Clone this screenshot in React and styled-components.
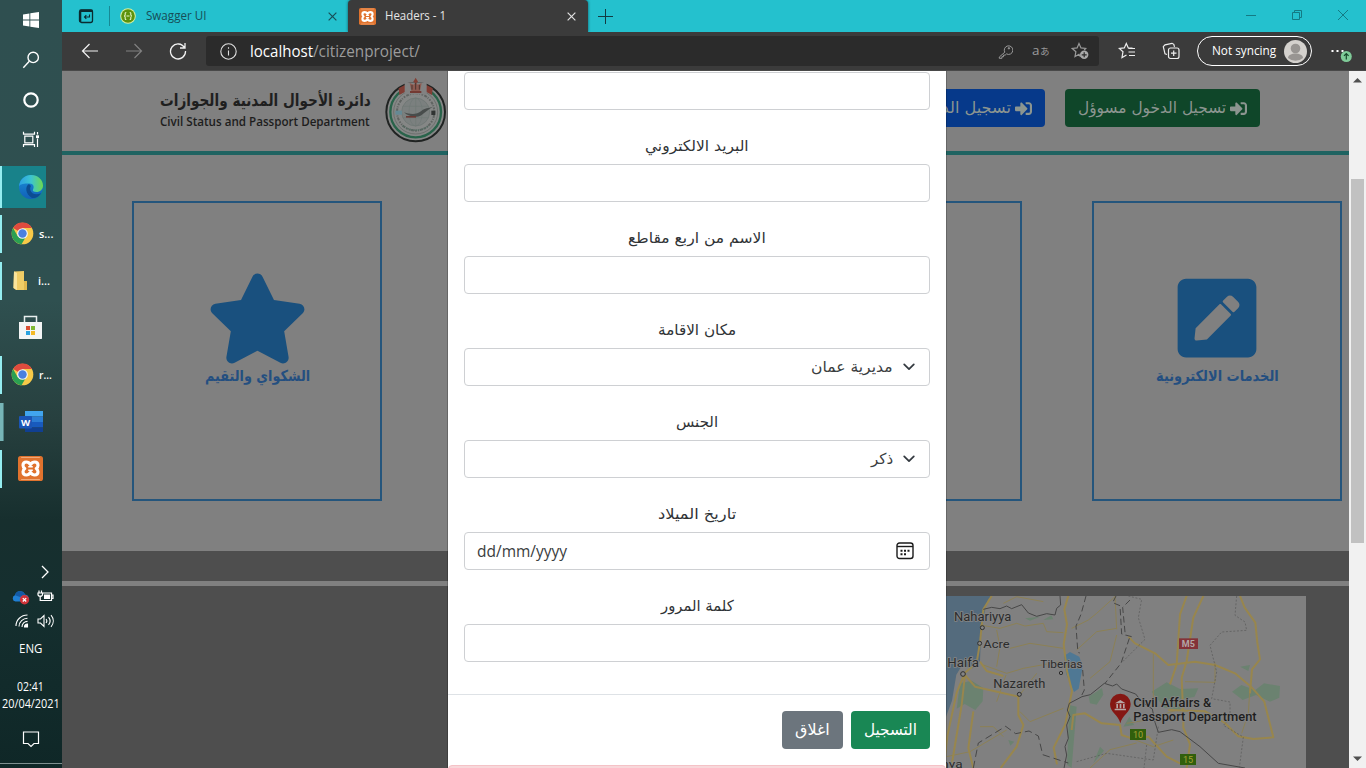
import React, { useLayoutEffect, useRef, useState } from "react";
import styled, { createGlobalStyle } from "styled-components";
import { FaSignInAlt, FaStar, FaPenSquare } from "react-icons/fa";

const GlobalStyle = createGlobalStyle`
  * { box-sizing: border-box; }
  body { margin: 0; overflow: hidden; font-family: "Open Sans", "Noto Sans", "Liberation Sans", sans-serif; }
  svg { display: block; flex: none; }
`;

const FitBox = styled.span`
  display: inline-block;
  flex: none;
  text-align: left;
  white-space: nowrap;
  line-height: ${(p) => p.$line || 20}px;
  font-size: ${(p) => p.$size}px;
  font-weight: ${(p) => p.$weight || 400};
  font-family: ${(p) => (p.$arabic ? '"DejaVu Sans", sans-serif' : '"Open Sans", "Noto Sans", sans-serif')};
  color: ${(p) => p.$color || "inherit"};
  width: ${(p) => p.$width}px;
`;
const FitInner = styled.span`
  display: inline-block;
  transform-origin: 0 50%;
`;

// Condenses or widens its text so that it fills exactly `width` pixels.
function FitText({ width, size, weight, line, color, arabic, children }) {
  const ref = useRef(null);
  const [scale, setScale] = useState(1);
  useLayoutEffect(() => {
    setScale(width / ref.current.offsetWidth);
  }, [width, size]);
  return (
    <FitBox $width={width} $size={size} $weight={weight} $line={line} $color={color} $arabic={arabic} dir={arabic ? "ltr" : undefined}>
      <FitInner ref={ref} dir={arabic ? "rtl" : undefined} style={{ transform: `scaleX(${scale})` }}>
        {children}
      </FitInner>
    </FitBox>
  );
}

const Screen = styled.div`
  display: grid;
  grid-template-columns: 62px 1304px;
  width: 1366px;
  height: 768px;
  overflow: hidden;
`;

/* ---------- Taskbar ---------- */
const Taskbar = styled.aside`
  display: flex;
  flex-direction: column;
  height: 768px;
  color: #fff;
  background: linear-gradient(180deg, #2f4f50 0, #2f5050 300px, #27403f 420px, #172f2e 520px, #152f2f 600px, #0f2727 768px);
`;
const SystemCell = styled.div`
  height: 40px;
  display: flex;
  align-items: center;
  justify-content: center;
`;
const AppCell = styled.div`
  height: 47px;
  display: flex;
  align-items: center;
`;
const AppTile = styled.div`
  width: ${(p) => (p.$active ? 46 : 62)}px;
  height: ${(p) => (p.$active ? 42 : 38)}px;
  display: flex;
  align-items: center;
  gap: 5px;
  padding-left: ${(p) => p.$indent || 18}px;
  background: ${(p) => (p.$active ? "#18828a" : "transparent")};
  box-shadow: ${(p) =>
    p.$stacked ? "inset 3px 0 #77b5b7, inset 4px 0 #4f8082" : p.$running ? "inset 2px 0 #94edf0" : "none"};
`;
const Spacer = styled.div`
  height: ${(p) => p.$h}px;
`;
const Tray = styled.div`
  display: flex;
  flex-direction: column;
`;
const TrayRow = styled.div`
  display: flex;
  align-items: center;
  justify-content: ${(p) => p.$justify || "center"};
  height: ${(p) => p.$h}px;
  gap: ${(p) => p.$gap || 0}px;
  padding: 0 ${(p) => p.$right || 0}px 0 ${(p) => p.$left || 0}px;
`;
const TrayEdge = styled.div`
  height: 1px;
  background: #7e9090;
`;

const ChromeIcon = () => (
  <svg width="23" height="23" viewBox="0 0 24 24">
    <circle cx="12" cy="12" r="11.3" fill="#f7c948" />
    <path d="M12 12 2.2 6.3A11.3 11.3 0 0 1 21.8 6.3H12Z" fill="#df4b3e" />
    <path d="M2.2 6.3A11.3 11.3 0 0 0 11 23.3L16 14.5 12 12 7 14.8Z" fill="#2ba052" />
    <circle cx="12" cy="12" r="5.6" fill="#f4f7f8" />
    <circle cx="12" cy="12" r="4.4" fill="#4a80e0" />
  </svg>
);
const XamppIcon = ({ size }) => (
  <svg width={size} height={size} viewBox="0 0 24 24">
    <rect width="24" height="24" rx="2.5" fill="#e0732e" />
    <path d="M3 1.5h18M3 22.5h18" stroke="#efa878" strokeWidth="1" />
    <path
      d="M12 8.300C10.900 6.600 9.600 5.800 8 5.800c-1.900 0-3.200 1.300-3.200 3 0 1.400.7 2.500 1.700 3.200-1 .7-1.700 1.800-1.700 3.200 0 1.700 1.300 3 3.200 3 1.600 0 2.900-.8 4-2.500 1.100 1.700 2.400 2.500 4 2.500 1.900 0 3.200-1.300 3.200-3 0-1.400-.7-2.500-1.700-3.200 1-.7 1.700-1.800 1.700-3.200 0-1.700-1.300-3-3.200-3-1.600 0-2.900.8-4 2.500Z"
      fill="none"
      stroke="#fff"
      strokeWidth="3"
      strokeLinejoin="round"
    />
    <path d="M9.800 10.400h4.400M9.800 13.600h4.400" stroke="#fff" strokeWidth="1.500" />
  </svg>
);

function TaskbarPanel() {
  return (
    <Taskbar>
      <SystemCell>
        <svg width="18" height="18" viewBox="0 0 18 18" fill="#fff">
          <path d="M1 3.4 7.4 2.5V8.500H1ZM8.300 2.300 17 1V8.500H8.300ZM1 9.400h6.400v6.100L1 14.600ZM8.300 9.400H17V17l-8.700-1.300Z" />
        </svg>
      </SystemCell>
      <SystemCell>
        <svg width="18" height="18" viewBox="0 0 18 18" fill="none" stroke="#fff" strokeWidth="1.4">
          <circle cx="11.2" cy="6.4" r="5.2" />
          <path d="m7.3 10.2-6 6.6" />
        </svg>
      </SystemCell>
      <SystemCell>
        <svg width="18" height="18" viewBox="0 0 18 18" fill="none" stroke="#fff" strokeWidth="2.2">
          <circle cx="9" cy="9" r="6.7" />
        </svg>
      </SystemCell>
      <SystemCell>
        <svg width="18" height="18" viewBox="0 0 18 18" fill="none" stroke="#fff" strokeWidth="1.2">
          <path d="M2.8 5.200h8v6.600h-8zM1.500 .8v2.300h11V.8M1.500 16v-2.300h11V16M15.500 1v2.500M15.500 7.500V16" />
          <path d="M14 4.300h3v2.800h-3z" fill="#fff" stroke="none" />
        </svg>
      </SystemCell>
      <Spacer $h={3} />
      <AppCell>
        <AppTile $running $active>
          <svg width="26" height="26" viewBox="0 0 26 26">
            <defs>
              <linearGradient id="edgeTop" x1="0" x2="1">
                <stop offset="0" stopColor="#2b9fe4" />
                <stop offset=".5" stopColor="#3cc5d0" />
                <stop offset="1" stopColor="#6ed84f" />
              </linearGradient>
              <linearGradient id="edgeLow" x1="0" x2="0" y2="1">
                <stop offset="0" stopColor="#1b8fd8" />
                <stop offset="1" stopColor="#1160b8" />
              </linearGradient>
            </defs>
            <circle cx="13" cy="13" r="12" fill="url(#edgeLow)" />
            <path d="M1 12C2 5 7 1 13 1c7 0 12 5 12 10.500 0 4-3 6.500-6.500 6.500-3 0-4.300-1.300-3.500-2.500 1.500-2.500.5-6-3.500-6C6 9.500 2.500 10 1 12Z" fill="url(#edgeTop)" />
            <path d="M11 10C7 12 7 20 14 24c4 .4 7.500-2 9-4.800-5 2-9.500 1-10.700-3.200-.6-2.200.7-4 .7-4Z" fill="#0c4d92" />
          </svg>
        </AppTile>
      </AppCell>
      <AppCell>
        <AppTile $running $indent={11}>
          <ChromeIcon />
          <FitText width={14} size={11} weight={600}>s...</FitText>
        </AppTile>
      </AppCell>
      <AppCell>
        <AppTile $running $indent={12}>
          <svg width="21" height="22" viewBox="0 0 21 22">
            <path d="M2 1.500 12 1v16l2 .5V20H4L1.500 18Z" fill="#f0cd66" />
            <path d="M2 1.500 5 3v17l-3.500-2Z" fill="#fae49b" />
            <path d="M12 11h3v9h-3z" fill="#e0b84e" />
          </svg>
          <FitText width={12} size={11} weight={600}>i...</FitText>
        </AppTile>
      </AppCell>
      <AppCell>
        <AppTile>
          <svg width="25" height="25" viewBox="0 0 25 25">
            <path d="M6.500 8V1.500h12V8" fill="none" stroke="#e8eeee" strokeWidth="1.500" />
            <path d="M1 7h23v16.500l-.5.500h-22L1 23.500Z" fill="#f3f5f5" />
            <path d="M8 11h4v4H8z" fill="#d94f34" />
            <path d="M13 11h4v4h-4z" fill="#80b832" />
            <path d="M8 16h4v4H8z" fill="#2aa2df" />
            <path d="M13 16h4v4h-4z" fill="#f4b927" />
          </svg>
        </AppTile>
      </AppCell>
      <AppCell>
        <AppTile $running $indent={11}>
          <ChromeIcon />
          <FitText width={13} size={11} weight={600}>r...</FitText>
        </AppTile>
      </AppCell>
      <AppCell>
        <AppTile $running $stacked>
          <svg width="26" height="24" viewBox="0 0 26 24">
            <path d="M7 1h18v5.500H7z" fill="#41a5ee" />
            <path d="M7 6.500h18V12H7z" fill="#2b7cd3" />
            <path d="M7 12h18v5.500H7z" fill="#185abd" />
            <path d="M7 17.500h18v4.500H7z" fill="#103f91" />
            <rect x="1" y="6" width="13" height="12.500" rx="1" fill="#1b55b5" />
            <text x="7.500" y="15.800" fontSize="9.500" fontWeight="700" fill="#fff" textAnchor="middle">W</text>
          </svg>
        </AppTile>
      </AppCell>
      <AppCell>
        <AppTile $running>
          <XamppIcon size={25} />
        </AppTile>
      </AppCell>
      <Spacer $h={69} />
      <Tray>
        <TrayRow $h={22} $justify="flex-end" $right={13}>
          <svg width="8" height="14" viewBox="0 0 8 14" fill="none" stroke="#fff" strokeWidth="1.300">
            <path d="m1 1 6 6-6 6" />
          </svg>
        </TrayRow>
        <Spacer $h={2} />
        <TrayRow $h={24} $gap={7} $left={4}>
          <svg width="18" height="15" viewBox="0 0 18 15">
            <path d="M3.500 11.500a3.200 3.200 0 0 1-.6-6.200A5.300 5.300 0 0 1 13 4.500a3.800 3.800 0 0 1 2 7Z" fill="#1f7fd4" />
            <path d="M3 5.200A5.300 5.300 0 0 1 13 4.500L8 7Z" fill="#1459a4" />
            <circle cx="12.500" cy="9.800" r="4.700" fill="#cf3339" />
            <path d="m10.800 8.100 3.400 3.400m0-3.400-3.400 3.400" stroke="#fff" strokeWidth="1.300" />
          </svg>
          <svg width="17" height="14" viewBox="0 0 17 14" fill="none" stroke="#fff" strokeWidth="1.200">
            <path d="M5.500 3h9v7.500h-9M14.500 5h1.500v3.500h-1.500" />
            <path d="M7 4.500h6v4.500H7z" fill="#fff" stroke="none" />
            <path d="M2 .5v2M4.500 .5v2M1 3h4.500v2l-1 1.200H2L1 5zM3.200 6.200v4.300H7" />
          </svg>
        </TrayRow>
        <TrayRow $h={24} $gap={8} $left={7}>
          <svg width="14" height="14" viewBox="0 0 14 14" fill="none" stroke="#fff" strokeWidth="1.100">
            <path d="M1 12C1 6 6 1 12.500 1M4 12.500C4 8 8 4.200 12.500 4.200M7 13c0-3.300 2.500-5.600 5.500-5.600" />
            <path d="M9.500 13c0-1.800 1.200-3 3-3v3Z" fill="#fff" />
          </svg>
          <svg width="18" height="14" viewBox="0 0 18 14" fill="none" stroke="#fff" strokeWidth="1.100">
            <path d="M1 5h2.500L7 1.500v11L3.500 9H1ZM9 5c1 1.200 1 2.800 0 4M11.500 3.200c2 2.300 2 5.300 0 7.600M14 1.200c3 3.500 3 8.100 0 11.600" />
          </svg>
        </TrayRow>
        <Spacer $h={6} />
        <TrayRow $h={20} $right={2}>
          <FitText width={23} size={12}>ENG</FitText>
        </TrayRow>
        <Spacer $h={18} />
        <TrayRow $h={20} $right={1}>
          <FitText width={27} size={12}>02:41</FitText>
        </TrayRow>
        <TrayRow $h={13}>
          <FitText width={58} size={12} line={13}>20/04/2021</FitText>
        </TrayRow>
        <Spacer $h={19} />
        <TrayRow $h={20}>
          <svg width="18" height="18" viewBox="0 0 18 18" fill="none" stroke="#fff" strokeWidth="1.200">
            <path d="M1.500 2h15v11.500h-4.500L9 16.500l-3-3H1.500Z" />
          </svg>
        </TrayRow>
        <Spacer $h={14} />
        <TrayEdge />
      </Tray>
    </Taskbar>
  );
}

/* ---------- Browser chrome ---------- */
const Browser = styled.div`
  display: flex;
  flex-direction: column;
  height: 768px;
  overflow: hidden;
`;
const TabStrip = styled.div`
  height: 32px;
  display: flex;
  align-items: center;
  background: #24c1ce;
  color: #17525b;
`;
const TabActions = styled.div`
  width: 48px;
  height: 20px;
  display: flex;
  align-items: center;
  padding-left: 16px;
  border-right: 1px solid #178995;
`;
const Tab = styled.div`
  width: ${(p) => p.$width}px;
  height: 32px;
  display: flex;
  align-items: center;
  padding: 0 ${(p) => p.$right}px 0 ${(p) => p.$left}px;
  gap: ${(p) => p.$gap || 9}px;
  color: ${(p) => (p.$active ? "#e6e6e6" : "#174e57")};
  background: ${(p) => (p.$active ? "#3b3b3b" : "transparent")};
  border-radius: 4px 4px 0 0;
  box-shadow: ${(p) => (p.$active ? "0 0 3px rgba(0, 40, 50, 0.7)" : "none")};
  & > svg:last-child { margin-left: auto; }
`;
const NewTab = styled.div`
  padding-left: 10px;
`;
const WindowButtons = styled.div`
  margin-left: auto;
  display: flex;
  align-items: center;
  gap: 34px;
  padding: 0 17px 3px 0;
`;
const Toolbar = styled.div`
  height: 39px;
  display: flex;
  align-items: center;
  background: #3b3b3b;
  border-bottom: 1px solid #494949;
  color: #fff;
`;
const NavButtons = styled.div`
  width: 144px;
  display: flex;
  gap: 26px;
  padding-left: 19px;
`;
const AddressBar = styled.div`
  width: 893px;
  height: 30px;
  display: flex;
  align-items: center;
  padding: 0 10px 0 14px;
  background: #2b2b2b;
  border-radius: 3px;
`;
const Url = styled.div`
  display: flex;
  margin-left: 13px;
`;
const AddressActions = styled.div`
  margin-left: auto;
  display: flex;
  align-items: center;
  gap: 18px;
  color: #9a9a9a;
`;
const ToolActions = styled.div`
  display: flex;
  align-items: center;
  gap: 26px;
  padding-left: 19px;
`;
const Profile = styled.div`
  width: 115px;
  height: 30px;
  margin-left: 17px;
  display: flex;
  align-items: center;
  justify-content: space-between;
  padding: 0 4px 0 14px;
  border: 1px solid #fff;
  border-radius: 15px;
`;
const More = styled.div`
  margin-left: 18px;
`;

const CloseIcon = ({ size = 9, color }) => (
  <svg width={size} height={size} viewBox="0 0 10 10" stroke={color} strokeWidth="1.300">
    <path d="m.7.700 8.600 8.600m0-8.600L.7 9.300" />
  </svg>
);

function Tabs() {
  return (
    <TabStrip>
      <TabActions>
        <svg width="16" height="16" viewBox="0 0 16 16" fill="none" stroke="#0b2b30" strokeWidth="1.300">
          <rect x="1.500" y="2" width="13" height="12.500" rx="2" />
          <path d="M1.500 2.800h13" strokeWidth="2.400" />
          <path d="M2.500 4v10" strokeWidth="1.600" />
          <path d="M11.500 6.500v2.500H6.500M8.300 7.200 6.500 9l1.800 1.800" strokeWidth="1.100" />
        </svg>
      </TabActions>
      <Tab $width={238} $left={10} $right={11} $gap={10}>
        <svg width="16" height="16" viewBox="0 0 16 16">
          <circle cx="8" cy="8" r="7.800" fill="#d8f0a0" />
          <circle cx="8" cy="8" r="6.800" fill="#5d920d" />
          <path d="M6.300 4.500c-1.600 0-1 1.500-1.100 2.300 0 .8-.4 1.200-1.200 1.200.8 0 1.200.4 1.200 1.200.1.800-.5 2.300 1.100 2.300M9.700 4.500c1.600 0 1 1.500 1.100 2.300 0 .8.4 1.200 1.200 1.200-.8 0-1.200.4-1.200 1.200-.1.800.5 2.300-1.100 2.300M6.500 8h3" fill="none" stroke="#e5f5c5" strokeWidth="1.100" />
        </svg>
        <FitText width={60} size={12}>Swagger UI</FitText>
        <CloseIcon color="#174e57" />
      </Tab>
      <Tab $active $width={240} $left={11} $right={12}>
        <XamppIcon size={17} />
        <FitText width={61} size={12}>Headers - 1</FitText>
        <CloseIcon color="#e2e2e2" />
      </Tab>
      <NewTab>
        <svg width="15" height="15" viewBox="0 0 15 15" stroke="#123b42" strokeWidth="1">
          <path d="M7.500 0v15M0 7.500h15" />
        </svg>
      </NewTab>
      <WindowButtons>
        <svg width="12" height="12" viewBox="0 0 12 12" stroke="#147a84"><path d="M1 6.500h10" /></svg>
        <svg width="12" height="12" viewBox="0 0 12 12" fill="none" stroke="#147a84">
          <path d="M1.500 3.500h7v7h-7zM3.500 3.500v-2h7v7h-2" />
        </svg>
        <svg width="12" height="12" viewBox="0 0 12 12" stroke="#147a84"><path d="m1 1 10 10M11 1 1 11" /></svg>
      </WindowButtons>
    </TabStrip>
  );
}

function AddressRow() {
  return (
    <Toolbar>
      <NavButtons>
        <svg width="18" height="18" viewBox="0 0 18 18" fill="none" stroke="#f2f2f2" strokeWidth="1.200"><path d="M17 9H1.500M8.500 2l-7 7 7 7" /></svg>
        <svg width="18" height="18" viewBox="0 0 18 18" fill="none" stroke="#818181" strokeWidth="1.200"><path d="M1 9h15.500M9.500 2l7 7-7 7" /></svg>
        <svg width="18" height="18" viewBox="0 0 18 18" fill="none" stroke="#f2f2f2" strokeWidth="1.300"><path d="M15.500 5.700A7.500 7.500 0 1 0 16.500 9M16 1v5h-5" /></svg>
      </NavButtons>
      <AddressBar>
        <svg width="17" height="17" viewBox="0 0 17 17" fill="none" stroke="#e0e0e0" strokeWidth="1.100">
          <circle cx="8.500" cy="8.500" r="7.700" />
          <path d="M8.500 7.500v5M8.500 4.300v1.500" />
        </svg>
        <Url>
          <FitText width={63} size={16} line={28}>localhost</FitText>
          <FitText width={107} size={16} line={28} color="#9c9c9c">/citizenproject/</FitText>
        </Url>
        <AddressActions>
          <svg width="15" height="15" viewBox="0 0 15 15" fill="none" stroke="currentColor" strokeWidth="1">
            <path d="M6.800 8.200 1.300 13v1.300h2.600v-1.600h1.600v-1.600h1.700l1.300-1.200A4.300 4.300 0 1 0 6.800 8.200Z" />
            <circle cx="10.900" cy="4.300" r=".7" fill="currentColor" />
          </svg>
          <svg width="22" height="20" viewBox="0 0 22 20" fill="currentColor">
            <text x="1" y="14" fontSize="13.500" fontFamily="Open Sans">a</text>
            <text x="9" y="13.500" fontSize="9.500" fontFamily="Noto Sans CJK JP">あ</text>
          </svg>
          <svg width="18" height="18" viewBox="0 0 18 18" fill="none" stroke="currentColor" strokeWidth="1.200">
            <path d="M9.500 15 8 12.300l-4 2.200.9-4.800L1.300 6.500l4.800-.6L8 1.500l2 4.400 4.700.6-1.500 1.500" />
            <circle cx="13.200" cy="12.800" r="4.200" fill="#aaa" stroke="none" />
            <path d="M13.200 10.300v5M10.700 12.800h5" stroke="#2b2b2b" />
          </svg>
        </AddressActions>
      </AddressBar>
      <ToolActions>
        <svg width="18" height="18" viewBox="0 0 18 18" fill="none" stroke="#eee" strokeWidth="1.200">
          <path d="M14.500 6.200 10.300 5.900 8.300 1.500 6.300 5.900 1.300 6.400 5 9.700 4 15.500 8.500 13" />
          <path d="M10.500 6.500h6.500M10.500 10h6.500M11 13.500h6" />
        </svg>
        <svg width="18" height="18" viewBox="0 0 18 18" fill="none" stroke="#eee" strokeWidth="1.200">
          <rect x="6.500" y="6" width="10.500" height="10.500" rx="2" />
          <path d="M11.700 8.500v5.500M9 11.200h5.500M5 12.500l-2-.7L1.300 4.600 3 2.800l7-1.500 1.800 1 .7 2.500" />
        </svg>
      </ToolActions>
      <Profile>
        <FitText width={64} size={12.500}>Not syncing</FitText>
        <svg width="23" height="23" viewBox="0 0 23 23">
          <circle cx="11.500" cy="11.500" r="11.500" fill="#d4d1cd" />
          <circle cx="11.500" cy="8.500" r="4.800" fill="#989592" />
          <path d="M4 18c0-6 15-6 15 0a11.500 11.500 0 0 1-15 0Z" fill="#989592" />
        </svg>
      </Profile>
      <More>
        <svg width="24" height="24" viewBox="0 0 24 24">
          <path d="M1.500 12h2M6.500 12h2M11.500 12h2" stroke="#fff" strokeWidth="1.800" />
          <circle cx="16.300" cy="17.500" r="5.500" fill="#7fcb98" />
          <path d="M16.300 20.500v-5.700M14 16.800l2.300-2.300 2.300 2.300" stroke="#16482a" fill="none" strokeWidth="1.200" />
        </svg>
      </More>
    </Toolbar>
  );
}

/* ---------- Page ---------- */
const Viewport = styled.div`
  position: relative;
  height: 697px;
  display: grid;
  grid-template-columns: 1287px 17px;
  overflow: hidden;
`;
const Page = styled.main`
  height: 697px;
  background: #808080;
  overflow: hidden;
`;
const Header = styled.header`
  height: 84px;
  display: flex;
  justify-content: space-between;
  padding: 6px 89px 0 98px;
  border-bottom: 4px solid #1f6361;
`;
const Brand = styled.div`
  display: flex;
  gap: 13px;
`;
const BrandText = styled.div`
  display: flex;
  flex-direction: column;
  padding-top: 11px;
`;
const HeaderButtons = styled.div`
  display: flex;
  gap: 20px;
  padding-top: 12px;
`;
const LoginButton = styled.div`
  width: ${(p) => p.$width}px;
  height: 38px;
  display: flex;
  align-items: center;
  justify-content: flex-end;
  gap: 4px;
  padding-right: 13px;
  border-radius: 4px;
  color: #8c9590;
  background: ${(p) => p.$bg};
`;
const Cards = styled.section`
  display: flex;
  gap: 70px;
  height: 396px;
  padding: 46px 0 0 70px;
`;
const Card = styled.article`
  flex: none;
  width: 250px;
  height: 300px;
  display: flex;
  flex-direction: column;
  align-items: center;
  padding-top: ${(p) => p.$top || 65}px;
  border: 2px solid #24557c;
  color: #19507e;
`;
const CardTitle = styled.div`
  margin-top: ${(p) => p.$top}px;
  color: #244f80;
`;
const DarkBand = styled.div`
  height: 30px;
  background: #4e4e4e;
`;
const Footer = styled.footer`
  margin-top: 5px;
  height: 182px;
  display: flex;
  justify-content: flex-end;
  padding: 10px 43px 0 0;
  background: #4e4e4e;
`;
const Scrollbar = styled.div`
  display: flex;
  flex-direction: column;
  align-items: center;
  justify-content: space-between;
  padding: 6px 0;
  background: #f1f1f1;
`;
const Thumb = styled.div`
  width: 13px;
  height: 364px;
  background: #c1c1c1;
  margin: 95px 0 213px;
`;

const Emblem = () => (
  <svg width="64" height="68" viewBox="962 232 192 204">
    <circle cx="1057" cy="337" r="88" fill="#858786" stroke="#202322" strokeWidth="6" />
    <circle cx="1057" cy="337" r="76" fill="none" stroke="#29634a" strokeWidth="7" />
    <circle cx="1057" cy="337" r="66" fill="none" stroke="#5f6361" strokeWidth="2" />
    <circle cx="1057" cy="337" r="56" fill="none" stroke="#606462" strokeWidth="6" strokeDasharray="5 4 9 3 3 4" />
    <circle cx="1057" cy="337" r="42" fill="#7b807f" stroke="#6b7471" strokeWidth="2" />
    <ellipse cx="1057" cy="337" rx="20" ry="42" fill="none" stroke="#707875" strokeWidth="2" />
    <path d="M1018 320h78M1018 354h78M1057 295v84" stroke="#707875" strokeWidth="2" />
    <path d="M1022 338c18 6 38 8 52-4 10-9 22-9 34-12-14 8-24 17-34 25-15 9-39 4-52-9Z" fill="#484d4c" />
    <path d="M1028 349h30v5h-30z" fill="#6b3a35" />
    <path d="M996 333h20v12h-20z" fill="#658994" />
    <path d="M1104 333h12v13h-12z" fill="#303332" />
    <path d="M1006 266l18-10 6 18-22 12ZM1108 266l-18-10-6 18 22 12Z" fill="#813d34" />
    <path d="M1024 248h66v36h-66z" fill="#828282" />
    <path d="M1039 250l12 5 6-8 6 8 12-5-5 24h-26Z" fill="#8c5a50" />
    <path d="M1050 246l7-12 7 12-7 5Z" fill="#833f34" />
    <path d="M1046 256v14M1057 250v20M1068 256v14" stroke="#4a3431" strokeWidth="3" />
    <path d="M1040 277h34" stroke="#733a33" strokeWidth="6" />
    <path d="M1018 378c22 18 56 18 78 0" fill="none" stroke="#4f6b60" strokeWidth="5" strokeDasharray="3 3" />
  </svg>
);

const places = [
  ["Nahariyya", 42, 244, 172, 36],
  ["Acre", 130, 324, 79, 34],
  ["Haifa", 22, 382, 95, 36],
  ["Tiberias", 301, 384, 127, 34],
  ["Nazareth", 160, 444, 156, 36],
  ["nya", 4, 684, 64, 34],
];

const MapView = () => (
  <svg width="360" height="172" viewBox="18 168 1080 516" fontFamily="Roboto, sans-serif">
    <rect x="18" y="168" width="1080" height="516" fill="#808080" />
    <path d="M18 168h137l-17 28-14 72-4 95-21 22-34-7-16 26-13 78-18 48Z" fill="#546b7d" />
    <g fill="#6b8270">
      <path d="M60 430l35-8 35 22-2 40-22 26-32-18-24 14Z" />
      <path d="M635 455l45-28 40 20 55-2-12 26-52 8 12 30-50-6Z" />
      <path d="M876 455l28-20 42 15 26-20 48 8-2 35-28 12-42-20-40 15Z" />
      <path d="M446 470l40-26 4 20-20 30-20-4ZM388 495l22 5-15 184-14-10ZM255 235l45-5-30 12ZM900 380l30-5-5 18ZM310 240l24-14 6 12ZM550 560l18-30 15 25ZM205 600l18 5-12 12ZM460 670l20-50 12 12Z" />
    </g>
    <path d="M372 348l18-12 28 14 10 30-12 66-14 10-24-55Z" fill="#4f7894" />
    <g fill="none" stroke="#8c8055" strokeWidth="3">
      <path d="M130 215l18-40M120 255l60 10 50-15 25 8 55-8 10 25 50 3M210 325l60-15 100 15M170 270l10 50-10 60M130 375l70 25 50-15 110-20M395 265l50-25 25-20 55-50M410 330l60-55 60-10M450 415l60-50 20-80M525 168l5 100M170 485l28-80M235 470l55-70M240 515l30 30 100-40M20 650l70-15 110-65M120 560l40 0 30 30M640 340v140M735 425l90 2 0-60M930 440l-5 80-20 60M560 550l60-10 90-30M560 590l80 30 60-20M450 684l60-55 80-20M190 190l40-20 80 15" />
    </g>
    <g fill="none" stroke="#98864d" strokeWidth="6" strokeLinejoin="round">
      <path d="M155 168l-25 40-10 100-10 60-35 30-25 60-28 130-10 90M75 405l-10 90-30 180M120 365l20 28 50 15M75 405l30 35 130 30v55l15 30-20 65-48 64M385 168l-12 40 8 45-10 60 10 80 15 60-20 100-35 70 10 50M100 684l-15-60 15-110" />
      <path d="M740 168l-20 55-10 150-20 60M790 168l-30 65-20 130-15 50 5 120 0 30 20 50-10 71M565 290l20 20 60 30 40 35 80-10 60 10 60 25 48 40 40 45 27 107-60 5-45-8-40-40-60-35-110-4" />
      <path d="M900 168l14 35 32 45 6 60 8 50-24 30-6 72M395 570l5-45 35-5 50 30 55 5 5 30 30 10 50-5 55 60 40 20" />
    </g>
    <g fill="none" stroke="#474747" strokeWidth="3" strokeLinejoin="round">
      <path d="M130 208l25-6 25 4 20-8 15 8 30-12 20 25 25 10 30-8 25 4 5-20 12-10-2-27" />
      <path d="M438 168l-15 55-15 35 5 70 5 12M428 390l5 60-10 20M575 290l-30-8-5-85-22-9 10-20M568 295l-25 75-48 60M570 180l-22 22 8 85" strokeDasharray="19 10" />
      <path d="M426 470l-38 20-6 20 8 20-10 25 5 40-10 25 5 25-8 40M426 470l25-6 42-34 25 8 12-6 15 15 42 15 20 25 30 20 8 40 10 30 40-8 25 6 60 45 55 50 80 14" />
      <path d="M100 684l15-75 82-50 30 22 40-8 28 15 13 56 77 25" strokeDasharray="22 12" />
    </g>
    <g fill="none" stroke="#585858" strokeWidth="2" strokeDasharray="6 5">
      <path d="M565 168l40 10-10 55 20 65-70 70M890 168l-5 58 30 20 5 25-75 5-35 40 20 80-15 80 55 10 0 50-20 20 60 35-12 93M655 560l-15 100-140-20-90 25M620 615l-8 69" />
    </g>
    <g fill="#858585" stroke="#2e2e2e" strokeWidth="3">
      <circle cx="127" cy="263" r="6" /><circle cx="119" cy="310" r="6" /><circle cx="69" cy="402" r="7" /><circle cx="363" cy="399" r="5" /><circle cx="238" cy="463" r="6" />
    </g>
    <g fill="#2c2c2c" stroke="#858585" strokeWidth="5" paintOrder="stroke">
      {places.map(([name, x, y, w, size]) => (
        <text key={name} x={x} y={y} fontSize={size} textLength={w} lengthAdjust="spacingAndGlyphs">{name}</text>
      ))}
      <g fill="#1e1e1e" fontSize="38" fontWeight="500">
        <text x="580" y="500" textLength="234" lengthAdjust="spacingAndGlyphs">Civil Affairs &amp;</text>
        <text x="580" y="542" textLength="370" lengthAdjust="spacingAndGlyphs">Passport Department</text>
      </g>
    </g>
    <rect x="717" y="295" width="57" height="32" fill="#843238" />
    <text x="745" y="321" fontSize="27" fontWeight="700" fill="#b3a6a6" textAnchor="middle">M5</text>
    <rect x="570" y="567" width="48" height="33" fill="#315f0c" />
    <text x="594" y="593" fontSize="27" fill="#a9a334" textAnchor="middle">10</text>
    <rect x="720" y="642" width="48" height="33" fill="#315f0c" />
    <text x="744" y="668" fontSize="27" fill="#a9a334" textAnchor="middle">15</text>
    <path d="M541 550c-5-25-31-32-31-58a31 31 0 0 1 62 0c0 26-26 33-31 58Z" fill="#851713" />
    <path d="M525 490l16-10 16 10ZM529 492h5v13h-5zM539 492h5v13h-5zM549 492h5v13h-5zM524 506h34v5h-34z" fill="#b7a6a5" />
  </svg>
);

function SitePage() {
  return (
    <Page>
      <Header>
        <Brand>
          <BrandText>
            <FitText arabic width={211} size={16.500} weight={700} line={25} color="#1f1f1f">دائرة الأحوال المدنية والجوازات</FitText>
            <FitText width={210} size={12.500} weight={600} line={17} color="#1d1d1d">Civil Status and Passport Department</FitText>
          </BrandText>
          <Emblem />
        </Brand>
        <HeaderButtons>
          <LoginButton $bg="#06398a" $width={190}>
            <FitText arabic width={151} size={16} line={38}>تسجيل الدخول مواطن</FitText>
            <FaSignInAlt size={17} />
          </LoginButton>
          <LoginButton $bg="#0f4629" $width={195}>
            <FitText arabic width={148} size={16} line={38}>تسجيل الدخول مسوؤل</FitText>
            <FaSignInAlt size={17} />
          </LoginButton>
        </HeaderButtons>
      </Header>
      <Cards>
        <Card>
          <FaStar size={101} />
          <CardTitle $top={-5}><FitText arabic width={105} size={15} weight={700} line={24}>الشكواي والتقيم</FitText></CardTitle>
        </Card>
        <Card />
        <Card />
        <Card $top={70}>
          <FaPenSquare size={90} />
          <CardTitle $top={1}><FitText arabic width={123} size={15} weight={700} line={24}>الخدمات الالكترونية</FitText></CardTitle>
        </Card>
      </Cards>
      <DarkBand />
      <Footer><MapView /></Footer>
    </Page>
  );
}

/* ---------- Registration dialog ---------- */
const Modal = styled.div`
  position: absolute;
  top: 0;
  left: 386px;
  width: 498px;
  height: 697px;
  background: #fff;
  box-shadow: 0 0 0 1px rgba(0, 0, 0, 0.2);
  overflow: hidden;
`;
const ModalBody = styled.div`
  height: 623px;
  padding: 1px 16px 0;
`;
const Field = styled.div`
  height: 92px;
`;
const Control = styled.div`
  height: 38px;
  display: flex;
  align-items: center;
  justify-content: ${(p) => (p.$spread ? "space-between" : "flex-end")};
  gap: 9px;
  padding: 0 ${(p) => (p.$spread ? 15 : 13)}px 0 12px;
  border: 1px solid #ced0d3;
  border-radius: 4px;
  color: #3a3d40;
`;
const Label = styled.div`
  height: 54px;
  display: flex;
  justify-content: center;
  padding-top: 24px;
  color: #303336;
`;
const ModalFooter = styled.div`
  height: 71px;
  display: flex;
  justify-content: flex-end;
  gap: 8px;
  padding: 16px 16px 0;
  border-top: 1px solid #dee2e6;
`;
const Button = styled.div`
  width: ${(p) => p.$width}px;
  height: 38px;
  display: flex;
  align-items: center;
  justify-content: center;
  border-radius: 4px;
  color: #fff;
  background: ${(p) => p.$bg};
`;
const Alert = styled.div`
  height: 40px;
  background: #f8d7da;
  border: 1px solid #f5c2c7;
  border-radius: 4px;
`;

const Chevron = () => (
  <svg width="14" height="14" viewBox="0 0 16 16" fill="none" stroke="#343a40" strokeWidth="2" strokeLinecap="round" strokeLinejoin="round">
    <path d="m2.500 5 5.500 5.500L13.500 5" />
  </svg>
);
const CalendarIcon = () => (
  <svg width="18" height="18" viewBox="0 0 18 18" fill="none" stroke="#1b1b1b" strokeWidth="1.400">
    <rect x="1" y="1" width="16" height="15.500" rx="2.500" />
    <path d="M1 4.500h16" />
    <path d="M4.500 8.800h2M8 8.800h2M11.500 8.800h2M4.500 12.200h2M8 12.200h2" strokeWidth="2" />
  </svg>
);

function SelectControl({ width, children }) {
  return (
    <Control>
      <FitText arabic width={width} size={15} line={38}>{children}</FitText>
      <Chevron />
    </Control>
  );
}
const FieldLabel = ({ width, children }) => (
  <Label>
    <FitText arabic width={width} size={15} line={24}>{children}</FitText>
  </Label>
);

function RegisterModal() {
  return (
    <Modal>
      <ModalBody>
        <Field><Control /><FieldLabel width={104}>البريد الالكتروني</FieldLabel></Field>
        <Field><Control /><FieldLabel width={138}>الاسم من اربع مقاطع</FieldLabel></Field>
        <Field><Control /><FieldLabel width={78}>مكان الاقامة</FieldLabel></Field>
        <Field><SelectControl width={82}>مديرية عمان</SelectControl><FieldLabel width={42}>الجنس</FieldLabel></Field>
        <Field><SelectControl width={22}>ذكر</SelectControl><FieldLabel width={78}>تاريخ الميلاد</FieldLabel></Field>
        <Field>
          <Control $spread>
            <FitText width={90} size={15.500} line={36}>dd/mm/yyyy</FitText>
            <CalendarIcon />
          </Control>
          <FieldLabel width={73}>كلمة المرور</FieldLabel>
        </Field>
        <Field><Control /></Field>
      </ModalBody>
      <ModalFooter>
        <Button $bg="#6c757d" $width={61}><FitText arabic width={35} size={15.500} line={38}>اغلاق</FitText></Button>
        <Button $bg="#198754" $width={79}><FitText arabic width={53} size={15.500} line={38}>التسجيل</FitText></Button>
      </ModalFooter>
      <Alert />
    </Modal>
  );
}

export default function App() {
  return (
    <Screen>
      <GlobalStyle />
      <TaskbarPanel />
      <Browser>
        <Tabs />
        <AddressRow />
        <Viewport>
          <SitePage />
          <Scrollbar>
            <svg width="9" height="6" viewBox="0 0 9 6"><path d="M0 5.500 4.500 1 9 5.500Z" fill="#505050" /></svg>
            <Thumb />
            <svg width="9" height="6" viewBox="0 0 9 6"><path d="M0 .5 4.500 5 9 .5Z" fill="#505050" /></svg>
          </Scrollbar>
          <RegisterModal />
        </Viewport>
      </Browser>
    </Screen>
  );
}
